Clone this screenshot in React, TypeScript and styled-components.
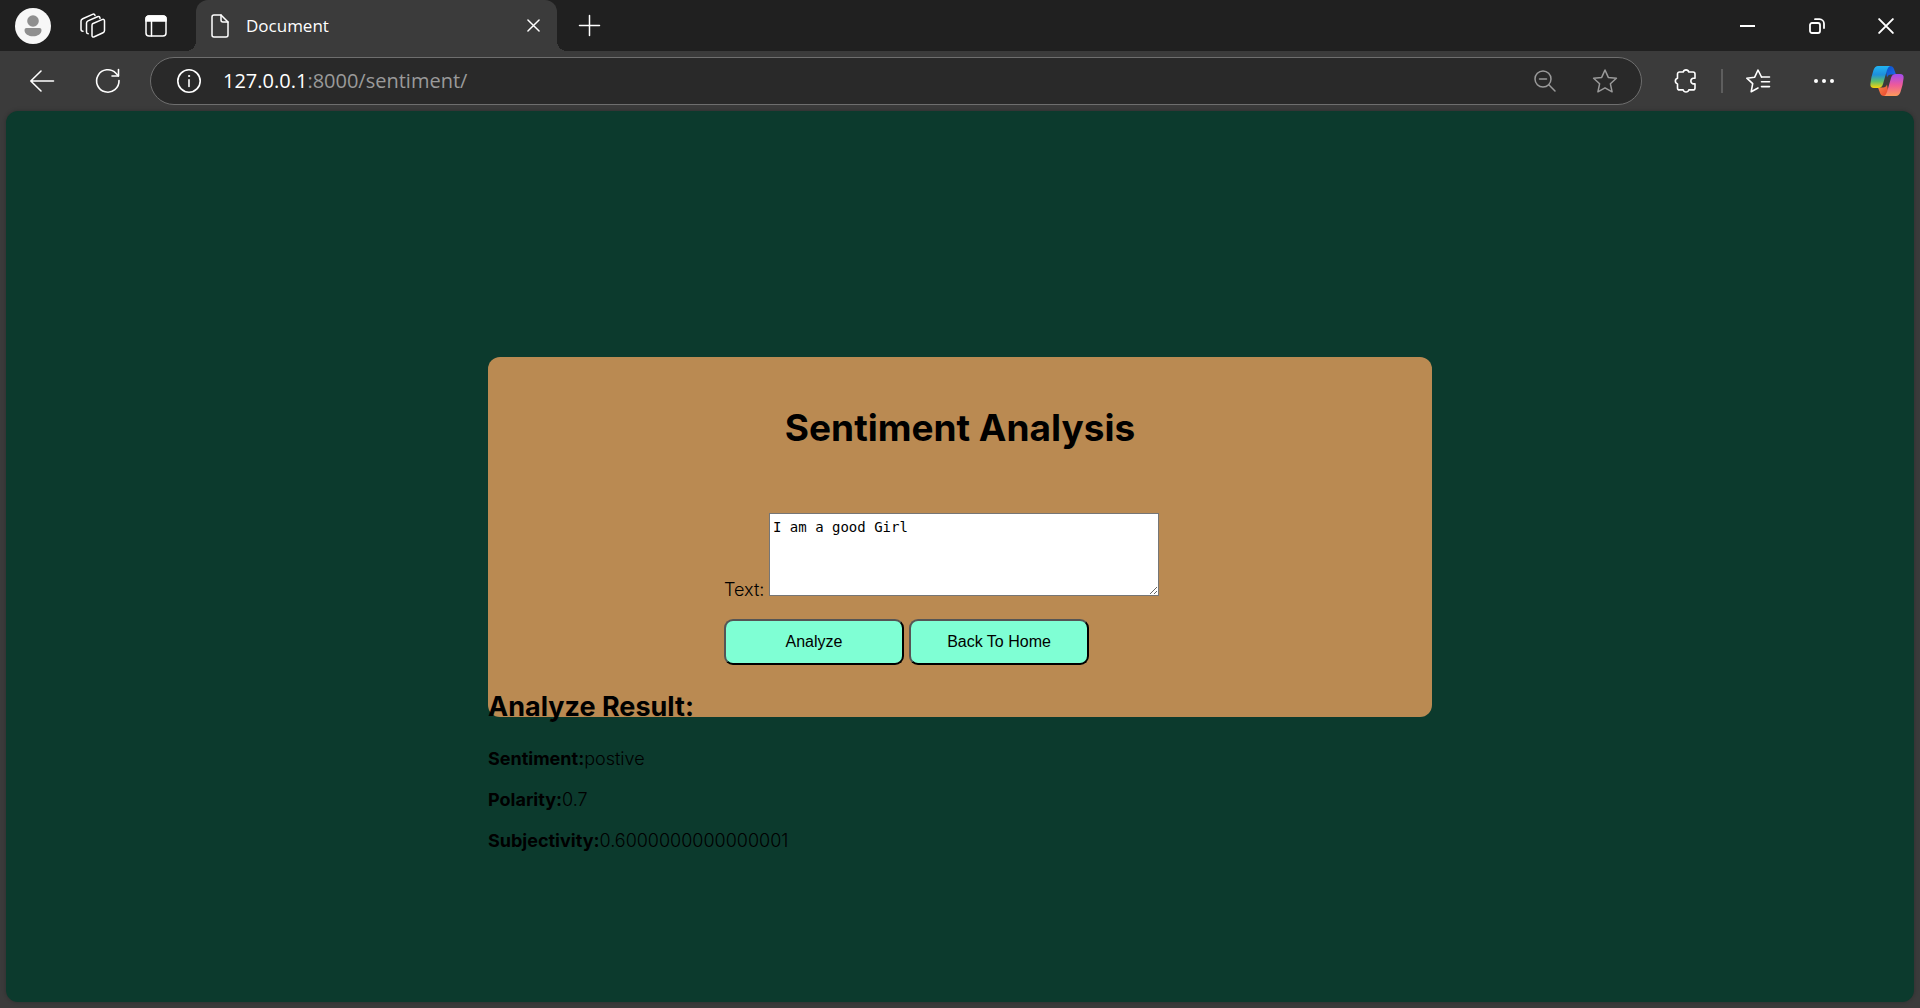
import React from "react";
import styled, { createGlobalStyle } from "styled-components";

const GlobalStyle = createGlobalStyle`
  *, *::before, *::after { box-sizing: border-box; }
  html, body, #root { height: 100%; margin: 0; }
  button { font: inherit; color: inherit; }
`;

const Browser = styled.div`
  display: flex;
  flex-direction: column;
  min-height: 100%;
  background: #3b3b3b;
  color: #ffffff;
  font-family: "Open Sans", "Noto Sans", sans-serif;
`;

const TitleBar = styled.header`
  display: flex;
  align-items: stretch;
  height: 51px;
  background: #202020;
`;

const IconButton = styled.button<{ $width?: number; $muted?: boolean }>`
  display: flex;
  align-items: center;
  justify-content: center;
  flex: none;
  width: ${(p) => p.$width ?? 66}px;
  padding: 0;
  border: 0;
  background: transparent;
  color: ${(p) => (p.$muted ? "#9a9a9a" : "#ffffff")};
  svg {
    display: block;
    overflow: visible;
  }
`;

const Tab = styled.div`
  position: relative;
  display: flex;
  align-items: center;
  flex: 0 1 361px;
  margin-left: 4px;
  padding: 0 12px 0 15px;
  border-radius: 12px 12px 0 0;
  background: #3b3b3b;
  &::before,
  &::after {
    content: "";
    position: absolute;
    bottom: 0;
    width: 10px;
    height: 10px;
  }
  &::before {
    right: 100%;
    background: radial-gradient(circle at 0 0, transparent 10px, #3b3b3b 10px);
  }
  &::after {
    left: 100%;
    background: radial-gradient(circle at 100% 0, transparent 10px, #3b3b3b 10px);
  }
`;

const TabTitle = styled.span`
  flex: 1;
  padding-left: 17px;
  font-size: 17px;
  line-height: 24px;
`;

const WindowControls = styled.div`
  display: flex;
  margin-left: auto;
`;

const Toolbar = styled.nav`
  display: flex;
  align-items: stretch;
  height: 60px;
  padding: 6px 3px 6px 9px;
`;

const AddressBar = styled.div`
  display: flex;
  align-items: stretch;
  flex: 1;
  min-width: 0;
  margin: 0 11px 0 9px;
  padding: 0 6px 0 5px;
  border: 1px solid #6e6e6e;
  border-radius: 24px;
  background: #292929;
`;

const Address = styled.div`
  flex: 1;
  align-self: center;
  min-width: 0;
  padding-left: 1px;
  font-size: 20px;
  line-height: 26px;
  color: #9a9a9a;
  white-space: nowrap;
  outline: none;
`;

const Host = styled.span`
  color: #ffffff;
`;

const Divider = styled.span`
  align-self: center;
  width: 2px;
  height: 24px;
  margin: 0 2px;
  background: #5e5e5e;
`;

const Page = styled.main`
  flex: 1;
  margin: 0 6px 6px;
  padding: 246px 16px 24px;
  border-radius: 12px;
  background: #0c3a2d;
  box-shadow: 0 0 4px rgba(0, 0, 0, 0.25);
  color: #000000;
  font-family: Inter, sans-serif;
  font-size: 18px;
  font-weight: 300;
`;

const Content = styled.div`
  max-width: 944px;
  margin: 0 auto;
`;

const Card = styled.section`
  padding: 48px 24px 52px;
  border-radius: 12px;
  background: #ba8a52;
`;

const Title = styled.h1`
  margin: 0 0 62px;
  font-size: 37px;
  line-height: 46px;
  font-weight: 700;
  text-align: center;
`;

const Form = styled.form`
  width: 472px;
  max-width: 100%;
  margin: 0 auto;
`;

const Field = styled.div`
  display: flex;
  align-items: flex-end;
  gap: 5px;
`;

const FieldLabel = styled.label`
  width: 40px;
  font-size: 18px;
  line-height: 12px;
`;

const TextArea = styled.textarea`
  width: 390px;
  height: 83px;
  padding: 3px;
  border: 1px solid #767676;
  border-radius: 0;
  background: #ffffff;
  color: #000000;
  font-family: "DejaVu Sans Mono", monospace;
  font-size: 14px;
  line-height: 20px;
`;

const Actions = styled.div`
  display: flex;
  gap: 5px;
  margin-top: 23px;
`;

const ActionButton = styled.button`
  width: 180px;
  height: 46px;
  padding: 0;
  border: 2px solid;
  border-color: #555555 #000000 #000000 #555555;
  border-radius: 9px;
  background: #7fffd4;
  color: #000000;
  font-family: "Liberation Sans", Arial, sans-serif;
  font-size: 16px;
  font-weight: 400;
`;

/* The heading of the results sits on the lower edge of the card. */
const Results = styled.section`
  margin-top: -28px;
`;

const ResultsTitle = styled.h2`
  margin: 0 0 22px;
  font-size: 27px;
  line-height: 36px;
  font-weight: 700;
`;

const Result = styled.p`
  margin: 0 0 17px;
  font-size: 18px;
  line-height: 24px;
  strong {
    font-weight: 700;
  }
`;

const stroke = {
  fill: "none",
  stroke: "currentColor",
  strokeLinecap: "round" as const,
  strokeLinejoin: "round" as const,
};

const AvatarIcon = () => (
  <svg width="36" height="36" viewBox="0 0 36 36">
    <circle cx="18" cy="18" r="18" fill="#f7f7f7" />
    <circle cx="18" cy="13" r="5.8" fill="#8f8f8f" />
    <path d="M11.5 20h13a2 2 0 0 1 2 2c0 4-4 6.3-8.500 6.300S9.500 26 9.500 22a2 2 0 0 1 2-2z" fill="#8f8f8f" />
  </svg>
);

const WorkspacesIcon = () => (
  <svg width="26" height="26" viewBox="0 0 26 26" {...stroke} strokeWidth="1.500">
    <path d="M12.500 10.800l9.500-4.200q2.500-.9 2.500 1.500v9.400q0 1.500-1.500 2.200l-8.700 4.100q-2.300.9-2.300-1.400v-9.700q0-1.300.5-1.900z" />
    <path d="M20 5.500c0-1.800-1-2.500-2.600-1.800L8 7.900q-1.500.7-1.500 2.200v8.900q0 1.700 1.700 1.700" />
    <path d="M15 2.500c-.2-1.300-1.200-1.700-2.500-1.100L2.700 5.700Q1 6.500 1 8v8.300q0 2 2 2" />
  </svg>
);

const VerticalTabsIcon = () => (
  <svg width="22" height="22" viewBox="0 0 22 22" {...stroke} strokeWidth="1.500">
    <rect x="1" y="1" width="20" height="20" rx="3" />
    <path d="M1 6V4a3 3 0 0 1 3-3h14a3 3 0 0 1 3 3v2z" fill="currentColor" />
    <path d="M6.500 6v15" />
  </svg>
);

const DocumentIcon = () => (
  <svg width="18" height="24" viewBox="0 0 18 24" {...stroke} strokeWidth="1.500">
    <path d="M3 1h7l7 7v13a2 2 0 0 1-2 2H3a2 2 0 0 1-2-2V3a2 2 0 0 1 2-2z" />
    <path d="M10 1v5a2 2 0 0 0 2 2h5" />
  </svg>
);

const CrossIcon = ({ size, weight }: { size: number; weight: number }) => (
  <svg width={size} height={size} viewBox="0 0 14 14" {...stroke} strokeWidth={weight}>
    <path d="M1 1l12 12M13 1L1 13" />
  </svg>
);

const PlusIcon = () => (
  <svg width="21" height="21" viewBox="0 0 21 21" {...stroke} strokeWidth="1.500">
    <path d="M10.500 .500v20M.500 10.500h20" />
  </svg>
);

const MinimizeIcon = () => (
  <svg width="16" height="16" viewBox="0 0 16 16" stroke="currentColor" strokeWidth="2">
    <path d="M0 8h15" />
  </svg>
);

const RestoreIcon = () => (
  <svg width="16" height="16" viewBox="0 0 16 16" {...stroke} strokeWidth="1.800">
    <rect x="1" y="5" width="10" height="10" rx="2" />
    <path d="M6 1.200h4.500a4.500 4.500 0 0 1 4.500 4.500V10" />
  </svg>
);

const BackIcon = () => (
  <svg width="24" height="22" viewBox="0 0 24 22" {...stroke} strokeWidth="1.600">
    <path d="M23.500 11H.800M11 1L.800 11 11 21" />
  </svg>
);

const ReloadIcon = () => (
  <svg width="24" height="24" viewBox="0 0 24 24" {...stroke} strokeWidth="1.600">
    <path d="M23 11.500a11.200 11.200 0 1 1-3.100-7.300L22.300 6.800" />
    <path d="M22.500 .500v6.500h-6.500" />
  </svg>
);

const InfoIcon = () => (
  <svg width="24" height="24" viewBox="0 0 24 24" {...stroke} strokeWidth="1.600">
    <circle cx="12" cy="12" r="11.200" />
    <path d="M12 10.800v6.700" />
    <circle cx="12" cy="7" r=".6" fill="currentColor" strokeWidth="1" />
  </svg>
);

const ZoomOutIcon = () => (
  <svg width="22" height="22" viewBox="0 0 22 22" {...stroke} strokeWidth="1.500">
    <circle cx="9" cy="9" r="8" />
    <path d="M5.500 9h7M14.800 14.800L21 21" />
  </svg>
);

const StarIcon = () => (
  <svg width="24" height="24" viewBox="0 0 24 24" {...stroke} strokeWidth="1.500">
    <path d="M12 1l3.300 7.400 8.100.9-6 5.500 1.700 8L12 18.800l-7.100 4 1.700-8-6-5.500 8.100-.9z" />
  </svg>
);

const ExtensionsIcon = () => (
  <svg width="24" height="26" viewBox="0 0 24 26" {...stroke} strokeWidth="1.600">
    <path d="M5.500 4h3.700a2.900 2.900 0 0 1 5.600 0h4.200a2 2 0 0 1 2 2v4.300h-2a2.900 2.900 0 0 0 0 5.600h2v4a2 2 0 0 1-2 2h-4.200a2.900 2.900 0 0 1-5.600 0H5.500a2 2 0 0 1-2-2v-4a2.900 2.900 0 0 1 0-5.600V6a2 2 0 0 1 2-2z" />
  </svg>
);

const FavoritesIcon = () => (
  <svg width="24" height="24" viewBox="0 0 24 24" {...stroke} strokeWidth="1.600">
    <path d="M15.500 8L12 1 8.700 8.200.800 9.200l5.900 5.500L5.200 22.700l6.800-3.700" />
    <path d="M15.500 8h8M15.500 12.800h8M15.500 17.600h8" />
  </svg>
);

const MoreIcon = () => (
  <svg width="20" height="4" viewBox="0 0 20 4" fill="currentColor">
    <circle cx="2" cy="2" r="2" />
    <circle cx="10" cy="2" r="2" />
    <circle cx="18" cy="2" r="2" />
  </svg>
);

const CopilotIcon = () => (
  <svg width="34" height="30" viewBox="0 0 34 30">
    <defs>
      <linearGradient id="cool" x1="0" y1="0" x2="0" y2="1">
        <stop offset="0" stopColor="#22b4f2" />
        <stop offset=".4" stopColor="#1e8fdc" />
        <stop offset=".7" stopColor="#5fbf6a" />
        <stop offset="1" stopColor="#fbd30a" />
      </linearGradient>
      <linearGradient id="warm" x1="0" y1="0" x2="0" y2="1">
        <stop offset="0" stopColor="#a14bf0" />
        <stop offset=".5" stopColor="#ee5a9a" />
        <stop offset="1" stopColor="#fd9a5a" />
      </linearGradient>
      <linearGradient id="navy" x1="0" y1="0" x2="1" y2="1">
        <stop offset="0" stopColor="#0d4fc4" />
        <stop offset="1" stopColor="#1a6df0" />
      </linearGradient>
      <linearGradient id="ember" x1="0" y1="0" x2="1" y2="1">
        <stop offset="0" stopColor="#fb8a4a" />
        <stop offset="1" stopColor="#e8402c" />
      </linearGradient>
    </defs>
    <path d="M15 0h5q3 0 4 3l2 5.500H21q-3 0-4 3z" fill="url(#navy)" />
    <path d="M19 30h-5q-3 0-4-3l-2-5.500H13q3 0 4-3z" fill="url(#ember)" />
    <path d="M8 0h12q-2 1-3 4l-4 14q-1 4-5 4H4q-4 0-3.600-4Q1 11 3.500 4 5 0 8 0z" fill="url(#cool)" />
    <path d="M26 30H14q2-1 3-4l4-14q1-4 5-4h4q4 0 3.600 4Q33 19 30.500 26 29 30 26 30z" fill="url(#warm)" />
  </svg>
);

const results = [
  { name: "Sentiment:", value: "postive" },
  { name: "Polarity:", value: "0.7" },
  { name: "Subjectivity:", value: "0.6000000000000001" },
];

export default function App() {
  return (
    <Browser>
      <GlobalStyle />
      <TitleBar>
        <IconButton aria-label="Profile"><AvatarIcon /></IconButton>
        <IconButton $width={54} aria-label="Workspaces"><WorkspacesIcon /></IconButton>
        <IconButton $width={72} aria-label="Tab actions"><VerticalTabsIcon /></IconButton>
        <Tab>
          <DocumentIcon />
          <TabTitle>Document</TabTitle>
          <IconButton $width={24} aria-label="Close tab"><CrossIcon size={13} weight={1.6} /></IconButton>
        </Tab>
        <IconButton aria-label="New tab" $width={64}><PlusIcon /></IconButton>
        <WindowControls>
          <IconButton $width={69} aria-label="Minimize"><MinimizeIcon /></IconButton>
          <IconButton $width={69} aria-label="Restore"><RestoreIcon /></IconButton>
          <IconButton $width={69} aria-label="Close window"><CrossIcon size={16} weight={1.7} /></IconButton>
        </WindowControls>
      </TitleBar>
      <Toolbar>
        <IconButton aria-label="Back"><BackIcon /></IconButton>
        <IconButton aria-label="Reload"><ReloadIcon /></IconButton>
        <AddressBar>
          <IconButton aria-label="Site information"><InfoIcon /></IconButton>
          <Address role="textbox" aria-label="Address" tabIndex={0}>
            <Host>127.0.0.1</Host>:8000/sentiment/
          </Address>
          <IconButton $width={60} $muted aria-label="Zoom out"><ZoomOutIcon /></IconButton>
          <IconButton $width={60} $muted aria-label="Add to favorites"><StarIcon /></IconButton>
        </AddressBar>
        <IconButton aria-label="Extensions"><ExtensionsIcon /></IconButton>
        <Divider />
        <IconButton aria-label="Favorites"><FavoritesIcon /></IconButton>
        <IconButton aria-label="More"><MoreIcon /></IconButton>
        <IconButton $width={60} aria-label="Copilot"><CopilotIcon /></IconButton>
      </Toolbar>
      <Page>
        <Content>
          <Card>
            <Title>Sentiment Analysis</Title>
            <Form onSubmit={(e) => e.preventDefault()}>
              <Field>
                <FieldLabel htmlFor="text">Text:</FieldLabel>
                <TextArea id="text" defaultValue="I am a good Girl" spellCheck={false} />
              </Field>
              <Actions>
                <ActionButton type="submit">Analyze</ActionButton>
                <ActionButton type="button">Back To Home</ActionButton>
              </Actions>
            </Form>
          </Card>
          <Results>
            <ResultsTitle>Analyze Result:</ResultsTitle>
            {results.map((r) => (
              <Result key={r.name}>
                <strong>{r.name}</strong>
                {r.value}
              </Result>
            ))}
          </Results>
        </Content>
      </Page>
    </Browser>
  );
}
